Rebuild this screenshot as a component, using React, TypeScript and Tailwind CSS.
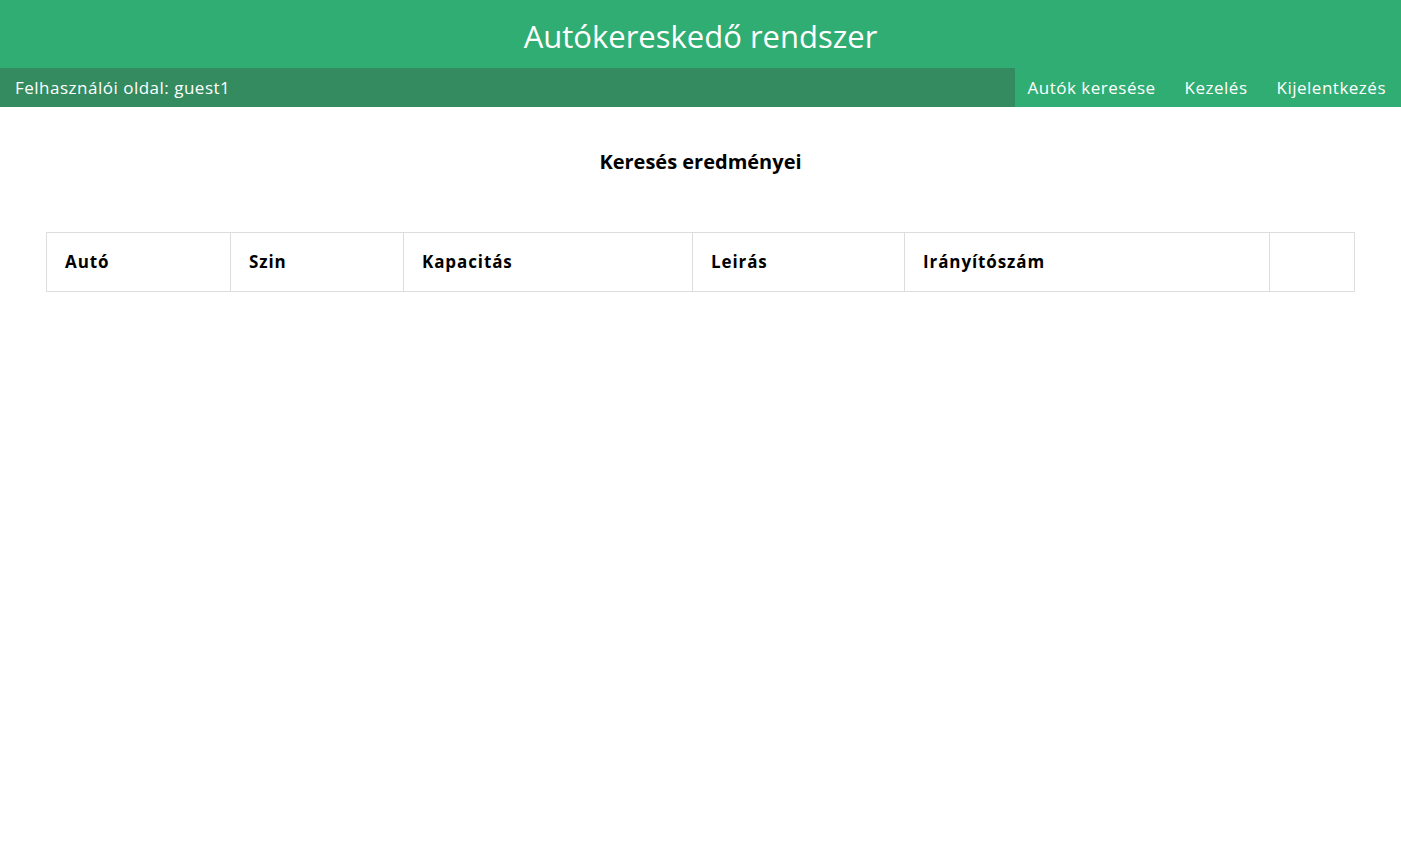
export default function App() {
  const columns = [
    { label: "Autó", width: "w-[184px]" },
    { label: "Szin", width: "w-[173px]" },
    { label: "Kapacitás", width: "w-[289px]" },
    { label: "Leirás", width: "w-[212px]" },
    { label: "Irányítószám", width: "w-[365px]" },
    { label: "", width: "" },
  ];

  const links = ["Autók keresése", "Kezelés", "Kijelentkezés"];

  return (
    <div className="min-h-screen bg-white font-['Open_Sans',sans-serif]">
      <header className="h-[68px] bg-[#2fad73] flex items-center justify-center">
        <h1 className="text-white text-[31px] pt-1">Autókereskedő rendszer</h1>
      </header>

      <nav className="flex h-[39px] bg-[#2fad73] text-white text-[17px] tracking-[0.5px]">
        <div className="w-[1015px] bg-[#338b5f] flex items-center pl-[15px]">
          Felhasználói oldal: guest1
        </div>
        <div className="flex-1 flex items-center justify-end gap-[29px] pr-[15px]">
          {links.map((link) => (
            <a key={link} href="#" className="hover:underline">
              {link}
            </a>
          ))}
        </div>
      </nav>

      <main className="pt-[40px]">
        <h2 className="text-center font-bold text-[20px] text-black">
          Keresés eredményei
        </h2>

        <table className="mt-[55px] mx-[46px] w-[1309px] border-collapse text-[17px] tracking-[0.9px]">
          <thead>
            <tr className="h-[59px]">
              {columns.map((col, i) => (
                <th
                  key={i}
                  className={`${col.width} border border-[#dddddd] text-left font-bold pl-[18px]`}
                >
                  {col.label}
                </th>
              ))}
            </tr>
          </thead>
        </table>
      </main>
    </div>
  );
}
